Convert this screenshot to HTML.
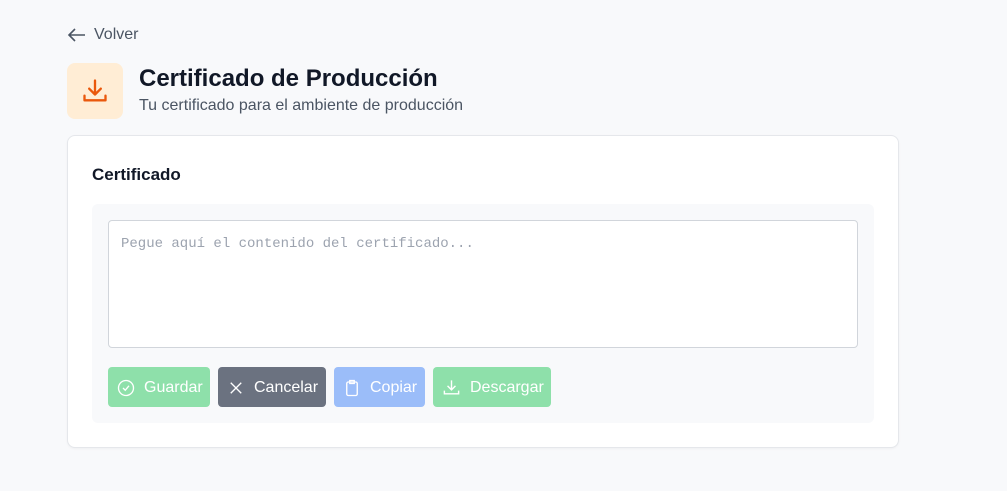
<!DOCTYPE html>
<html><head><meta charset="utf-8"><style>
*{box-sizing:border-box;margin:0;padding:0}
body{width:1007px;height:491px;background:#f8f9fb;font-family:"Liberation Sans",sans-serif;position:relative;overflow:hidden}
.back{position:absolute;left:67px;top:26px;display:flex;align-items:center;gap:8px;color:#4b5563;font-size:16px}
.ic{position:absolute;left:67px;top:63px;width:56px;height:56px;border-radius:8px;background:#ffedd5;display:flex;align-items:center;justify-content:center}
h1{position:absolute;left:139px;top:65px;font-size:24px;font-weight:bold;color:#111827}
.sub{position:absolute;left:139px;top:97px;font-size:16px;color:#4b5563}
.card{position:absolute;left:67px;top:135px;width:832px;height:313px;background:#fff;border:1px solid #e5e7eb;border-radius:8px;box-shadow:0 1px 2px rgba(0,0,0,.04)}
.card h2{position:absolute;left:24px;top:29px;font-size:17px;font-weight:bold;color:#111827}
.inner{position:absolute;left:24px;top:68px;width:782px;height:219px;background:#f8f9fb;border-radius:6px}
.ta{position:absolute;left:16px;top:16px;width:750px;height:128px;background:#fff;border:1px solid #d1d5db;border-radius:4px;font-family:"Liberation Mono",monospace;font-size:14px;color:#9ca3af;padding:15px 12px}
.btn{position:absolute;top:163px;height:40px;border-radius:4px;color:#fff;font-size:16px;display:flex;align-items:center;padding-left:9px;gap:9px;padding-top:1px}
</style></head><body>
<div class="back"><svg width="19" height="16" viewBox="0 0 19 16" fill="none" stroke="#4b5563" stroke-width="1.6"><path d="M18 8H2M8 2L2 8l6 6"/></svg>Volver</div>
<div class="ic"><svg width="28" height="28" viewBox="0 0 24 24" fill="none" stroke="#ea580c" stroke-width="2" stroke-linecap="round" stroke-linejoin="round"><path d="M3 16v4h18v-4M12 3v12M7 10l5 5 5-5"/></svg></div>
<h1>Certificado de Producción</h1>
<div class="sub">Tu certificado para el ambiente de producción</div>
<div class="card"><h2>Certificado</h2>
<div class="inner">
<div class="ta">Pegue aquí el contenido del certificado...</div>
<div class="btn" style="left:16px;width:102px;background:#8ee0aa"><svg width="18" height="18" viewBox="0 0 24 24" fill="none" stroke="#fff" stroke-width="1.8"><circle cx="12" cy="12" r="10"/><path d="M8 12l3 3 5-6"/></svg>Guardar</div>
<div class="btn" style="left:126px;width:108px;background:#6b7280"><svg width="18" height="18" viewBox="0 0 24 24" fill="none" stroke="#fff" stroke-width="1.8"><path d="M5 5l14 14M19 5L5 19"/></svg>Cancelar</div>
<div class="btn" style="left:242px;width:91px;background:#9bbdf9"><svg width="18" height="20" viewBox="0 0 24 24" fill="none" stroke="#fff" stroke-width="1.8"><rect x="5" y="4" width="14" height="18" rx="2"/><path d="M9 2h6v4H9z"/></svg>Copiar</div>
<div class="btn" style="left:341px;width:118px;background:#8ee0aa"><svg width="19" height="19" viewBox="0 0 24 24" fill="none" stroke="#fff" stroke-width="1.8"><path d="M3 16v4h18v-4M12 3v12M7 10l5 5 5-5"/></svg>Descargar</div>
</div></div>
</body></html>
